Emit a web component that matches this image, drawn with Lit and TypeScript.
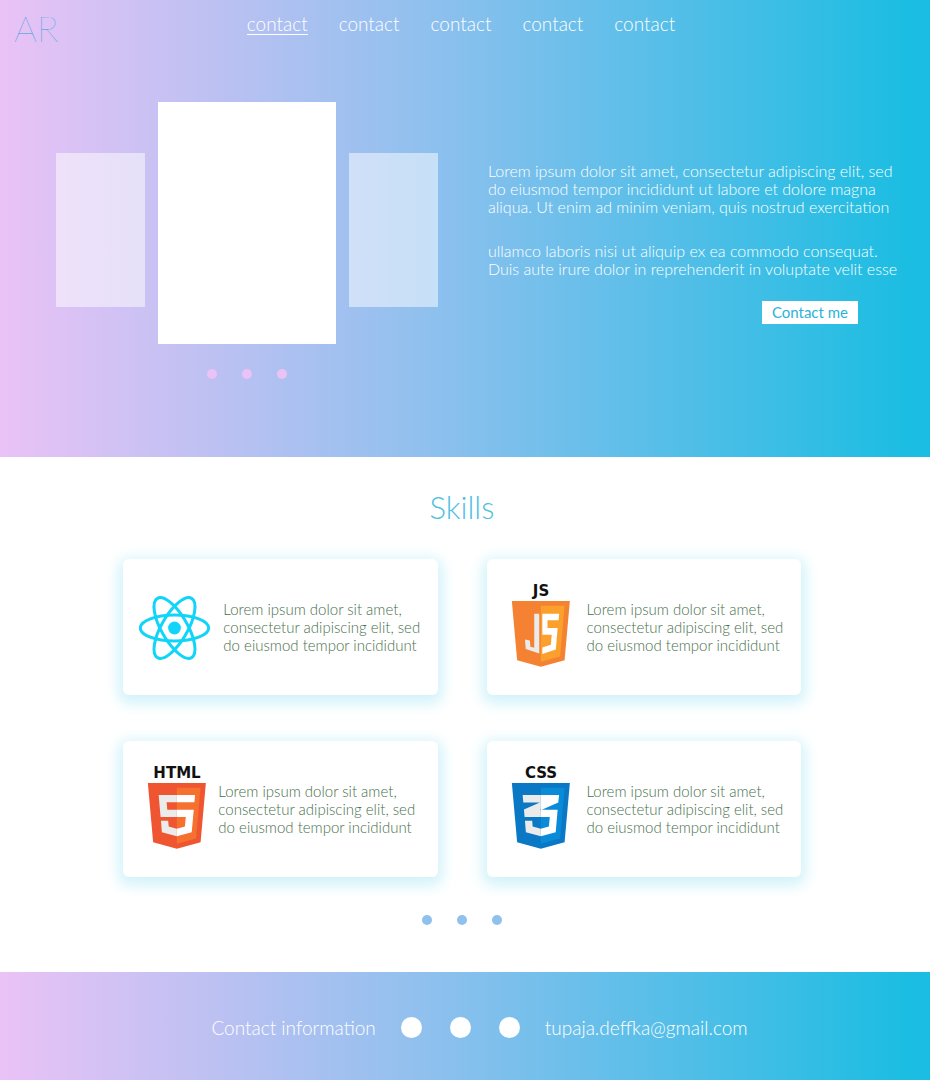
import { LitElement, html, css, svg } from "lit";
import { customElement, property } from "lit/decorators.js";

type LogoName = "react" | "js" | "html" | "css";

const shield = (label: string, outer: string, inner: string, mark: unknown) => svg`
  <text class="tag" x="38" y="17" text-anchor="middle">${label}</text>
  <g transform="translate(5 22) scale(0.1286)">
    <polygon points="71,460 30,0 481,0 440,460 255,512" fill=${outer} />
    <polygon points="255,472 405,431 440,37 255,37" fill=${inner} />
    ${mark}
  </g>`;

const logos: Record<LogoName, unknown> = {
  react: svg`
    <g transform="translate(35.5 49)" fill="none" stroke="#10d4f8" stroke-width="3">
      <ellipse rx="34.2" ry="13" />
      <ellipse rx="34.2" ry="13" transform="rotate(60)" />
      <ellipse rx="34.2" ry="13" transform="rotate(120)" />
      <circle r="6.4" fill="#10d4f8" stroke="none" />
    </g>`,
  js: shield("JS", "#f48232", "#fb9f2d", svg`
    <polygon fill="#ebebeb" points="204,99 243,99 243,409 138,374 132,300 170,308 174,356 204,364" />
    <polygon fill="#fff" points="267,99 398,99 393,150 307,150 307,210 386,210 372,378 267,412 267,362 333,340 340,262 267,262" />`),
  html: shield("HTML", "#ee5530", "#f6702f", svg`
    <path fill="#ebebeb" d="M255 208H181L176 150H255V94H114L129 264H255ZM255 355L192 338 188 293H132L139 382 255 414Z" />
    <path fill="#fff" d="M255 208V264H325L318 338 255 355V414L371 382 387 208ZM255 94V150H392L397 94Z" />`),
  css: shield("CSS", "#0b78c5", "#0a8bd8", svg`
    <path fill="#ebebeb" d="M114 94H255V205L248 208 255 210V264H129L124 206 248 151H119ZM255 355L192 338 188 293H132L139 382 255 414Z" />
    <path fill="#fff" d="M255 94H397L391 151 263 208H386L371 382 255 414V355L318 338 325 264H255Z" />`),
};

@customElement("dot-row")
class DotRow extends LitElement {
  @property() label = "";
  static styles = css`
    :host { display: flex; justify-content: center; gap: var(--dot-gap, 25px); }
    button {
      width: var(--dot-size, 10px);
      height: var(--dot-size, 10px);
      padding: 0;
      border: 0;
      border-radius: 50%;
      background: var(--dot-color, #fff);
      cursor: pointer;
    }
  `;
  render() {
    return [1, 2, 3].map((n) => html`<button type="button" aria-label="${this.label} ${n}"></button>`);
  }
}

@customElement("skill-card")
class SkillCard extends LitElement {
  @property() logo: LogoName = "react";
  static styles = css`
    :host {
      display: flex;
      align-items: center;
      gap: 8px;
      box-sizing: border-box;
      min-height: 136px;
      padding: 0 8px 0 16px;
      border-radius: 6px;
      background: #fff;
      box-shadow: 0 4px 14px 5px #d3f3fa;
    }
    :host([logo="html"]) { gap: 3px; }
    svg { flex: none; width: 76px; height: 96px; }
    .tag { font: bold 15px "DejaVu Sans", sans-serif; fill: #111; }
    p { margin: 0; font-size: 15px; line-height: 18px; color: #47704b; white-space: nowrap; }
  `;
  render() {
    return html`
      <svg viewBox="0 0 76 96" role="img" aria-label=${this.logo}>${logos[this.logo]}</svg>
      <p>Lorem ipsum dolor sit amet,<br />consectetur adipiscing elit, sed<br />do eiusmod tempor incididunt</p>`;
  }
}

@customElement("app-root")
class AppRoot extends LitElement {
  static styles = css`
    :host {
      --brand: linear-gradient(90deg, #eac2f6 0%, #8fc0ee 46%, #1bbde2 98%);
      display: block;
      font-family: Lato, "Open Sans", sans-serif;
      font-weight: 300;
      background: #fff;
    }
    a { color: inherit; text-decoration: none; }
    .hero { background: var(--brand); color: #fff; padding-bottom: 78px; }
    header {
      display: grid;
      grid-template-columns: 1fr auto 1fr;
      align-items: center;
      height: 56px;
      padding: 0 22px 0 14px;
    }
    .logo { font-size: 36px; line-height: 56px; font-weight: 100; color: #1f9edb; }
    nav { display: flex; gap: 31px; padding-bottom: 8px; }
    nav a { font-size: 19px; line-height: 21px; border-bottom: 1px solid transparent; }
    nav a.active { border-color: #fff; }
    .intro {
      display: grid;
      grid-template-columns: minmax(0, 382fr) minmax(0, 402fr);
      gap: 50px;
      padding: 46px 40px 0 56px;
    }
    .slides { display: flex; align-items: flex-end; gap: 13px; margin-bottom: 25px; }
    .slide { flex: 1; height: 154px; margin-bottom: 37px; background: rgba(255, 255, 255, 0.5); }
    .slide.current { flex: 2; height: 242px; margin-bottom: 0; background: #fff; }
    .carousel dot-row { --dot-color: #eac2f6; }
    .copy { display: flex; flex-direction: column; padding-top: 60px; font-size: 16px; line-height: 18px; white-space: nowrap; }
    .copy p { margin: 0 0 26px; }
    .copy p + p { margin-bottom: 23px; }
    .cta {
      align-self: flex-end;
      margin-right: 32px;
      padding: 0 10px;
      border: 0;
      background: #fff;
      color: #2bb3dc;
      font: 400 15px/23px Lato, sans-serif;
      cursor: pointer;
    }
    .skills { padding: 30px 6px 47px 0; }
    h2 { margin: 0 0 32px; text-align: center; font-size: 31px; line-height: 40px; font-weight: 300; color: #4cc0e0; }
    .cards { display: grid; grid-template-columns: 1fr 1fr; gap: 46px 49px; width: 73.3%; margin: 0 auto 38px; }
    .skills dot-row { --dot-color: #8fc0ee; }
    footer {
      display: flex;
      justify-content: center;
      align-items: center;
      gap: 25px;
      box-sizing: border-box;
      min-height: 108px;
      padding: 3px 0 0 29px;
      background: var(--brand);
      color: #fff;
      font-size: 19px;
      line-height: 24px;
    }
    footer dot-row { --dot-size: 21px; --dot-gap: 28px; }
  `;
  render() {
    const cards: LogoName[] = ["react", "js", "html", "css"];
    return html`
      <section class="hero">
        <header>
          <a class="logo" href="#">AR</a>
          <nav>${[0, 1, 2, 3, 4].map((i) => html`<a href="#contact" class=${i ? "" : "active"}>contact</a>`)}</nav>
        </header>
        <div class="intro">
          <div class="carousel">
            <div class="slides">
              <div class="slide"></div>
              <div class="slide current"></div>
              <div class="slide"></div>
            </div>
            <dot-row label="Slide"></dot-row>
          </div>
          <div class="copy">
            <p>Lorem ipsum dolor sit amet, consectetur adipiscing elit, sed<br />do eiusmod tempor incididunt ut labore et dolore magna<br />aliqua. Ut enim ad minim veniam, quis nostrud exercitation</p>
            <p>ullamco laboris nisi ut aliquip ex ea commodo consequat.<br />Duis aute irure dolor in reprehenderit in voluptate velit esse</p>
            <button class="cta" type="button">Contact me</button>
          </div>
        </div>
      </section>
      <section class="skills">
        <h2>Skills</h2>
        <div class="cards">${cards.map((c) => html`<skill-card logo=${c}></skill-card>`)}</div>
        <dot-row label="Skills page"></dot-row>
      </section>
      <footer id="contact">
        <span>Contact information</span>
        <dot-row label="Social link"></dot-row>
        <a href="mailto:tupaja.deffka@gmail.com">tupaja.deffka@gmail.com</a>
      </footer>`;
  }
}
